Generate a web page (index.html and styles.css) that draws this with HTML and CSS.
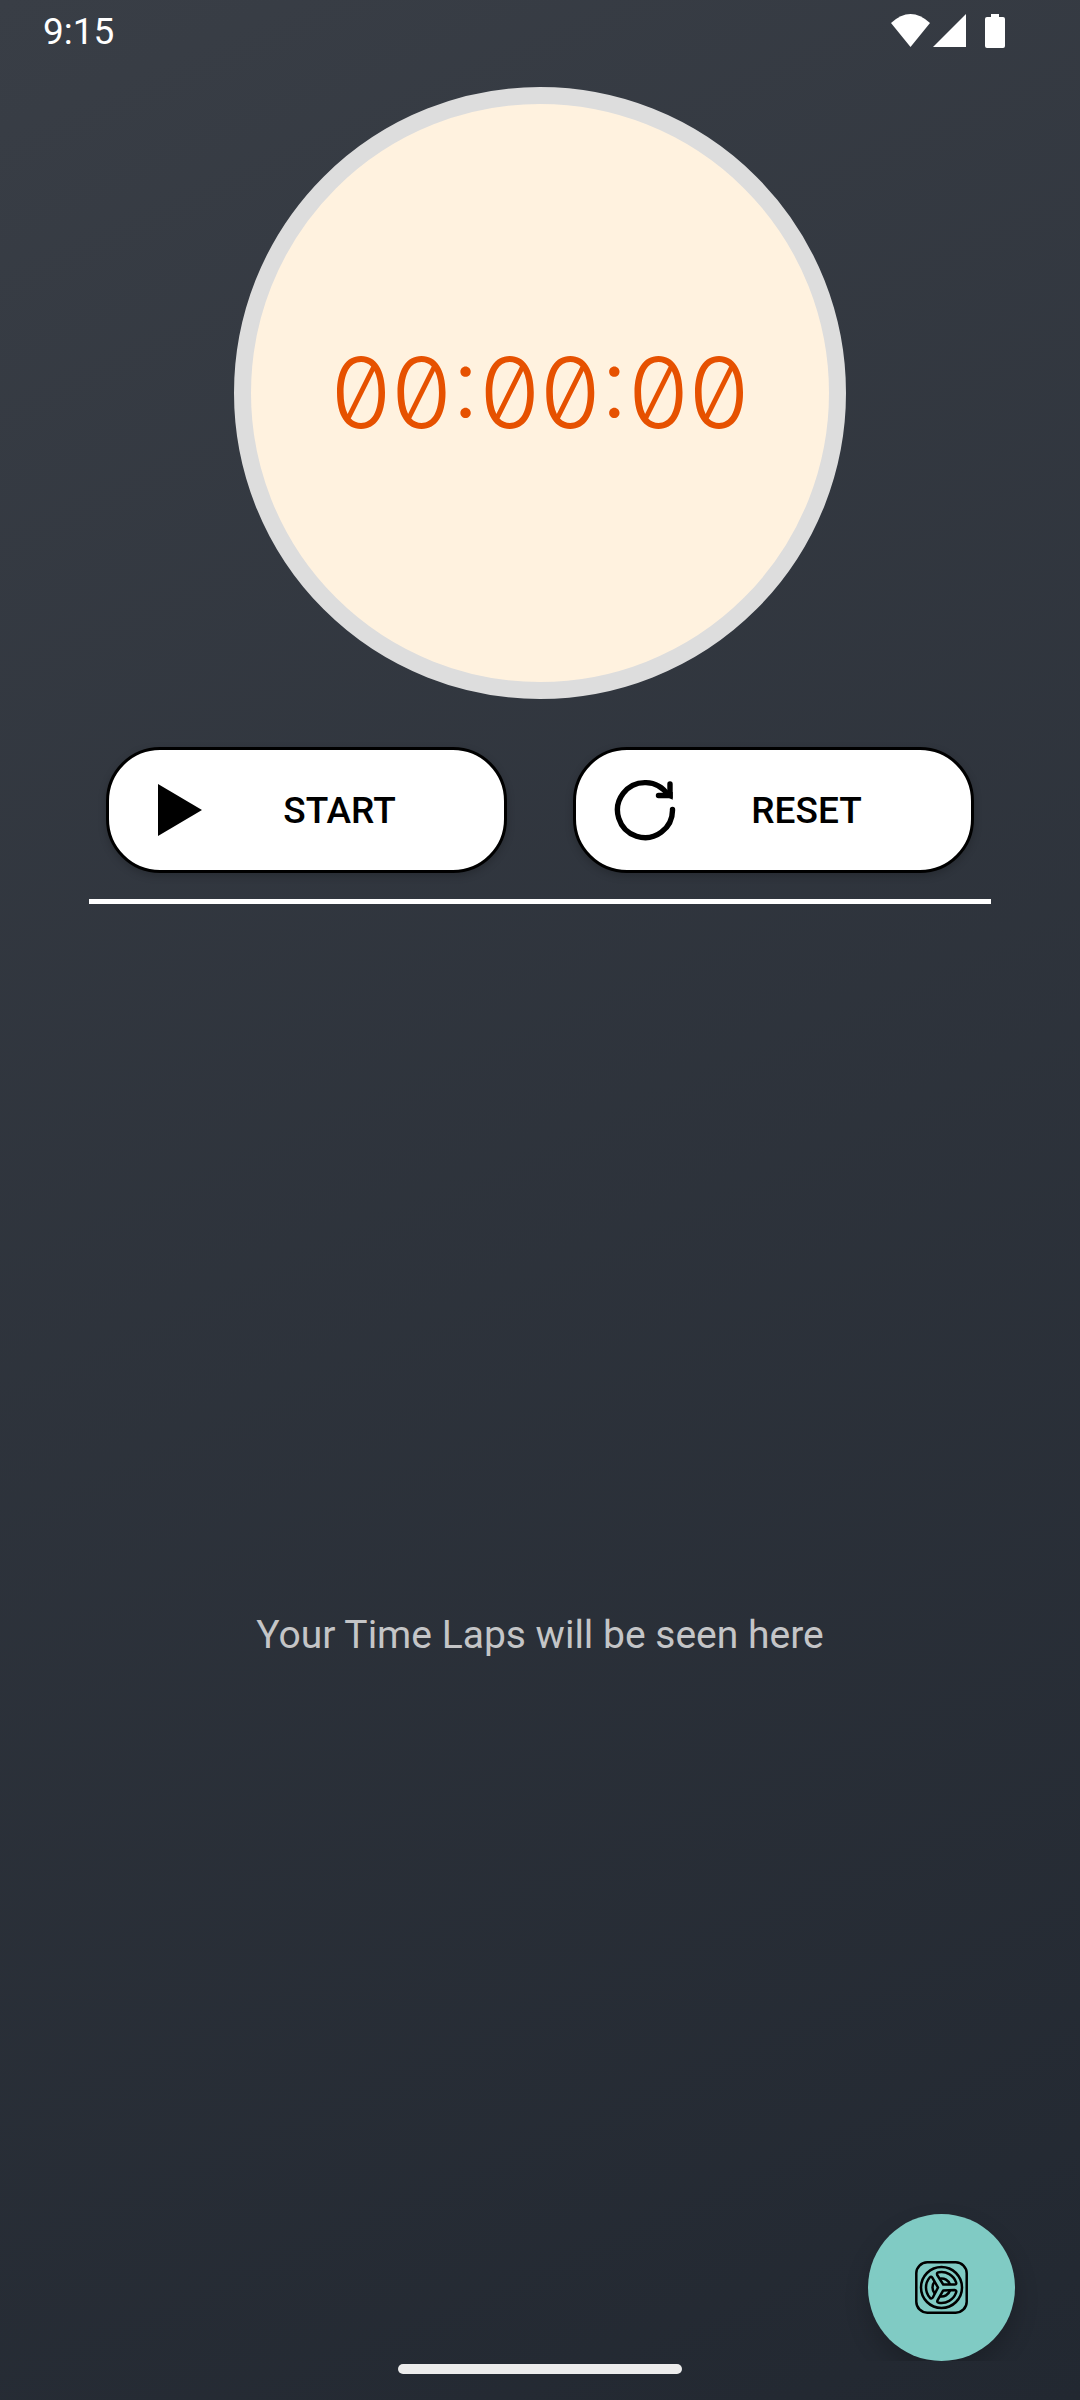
FILE: index.html
```html
<!DOCTYPE html>
<html lang="en">
<head>
<meta charset="utf-8">
<meta name="viewport" content="width=device-width, initial-scale=1">
<title>Stopwatch</title>
<link rel="stylesheet" href="styles.css">
</head>
<body>
<header class="status-bar">
  <time class="status-time">9:15</time>
  <div class="status-icons">
    <svg class="icon-wifi" viewBox="0 0 39 33" aria-hidden="true"><path d="M0 9Q19.500 -9 39 9L19.500 33Z"/></svg>
    <svg class="icon-signal" viewBox="0 0 33 33" aria-hidden="true"><path d="M33 0V33H0Z"/></svg>
    <svg class="icon-battery" viewBox="0 0 20 34" aria-hidden="true"><path d="M6 0h8v3h4a2 2 0 0 1 2 2v27a2 2 0 0 1-2 2H2a2 2 0 0 1-2-2V5a2 2 0 0 1 2-2h4z"/></svg>
  </div>
</header>
<main class="stopwatch">
  <section class="dial">
    <output class="dial-time">00:00:00</output>
  </section>
  <div class="controls">
    <button class="control" type="button">
      <svg class="control-icon" viewBox="0 0 66 66" aria-hidden="true"><path d="M13 7L57 33L13 59Z"/></svg>
      <span class="control-label">START</span>
    </button>
    <button class="control" type="button">
      <svg class="control-icon" viewBox="0 0 66 66" fill="none" stroke="#000" stroke-width="5.400" stroke-linecap="round" aria-hidden="true">
        <path d="M60.500 32.500A27.500 27.500 0 1 1 56 18"/>
        <path d="M58 7V18.500H46.500"/>
        <path d="M52 15.500L58 18.500V15" stroke-linecap="butt"/>
      </svg>
      <span class="control-label">RESET</span>
    </button>
  </div>
  <hr class="divider">
  <section class="laps">
    <p class="laps-empty">Your Time Laps will be seen here</p>
  </section>
  <button class="fab" type="button" aria-label="Settings">
    <svg class="fab-icon" viewBox="-26.500 -26.500 53 53" fill="none" stroke="#000" stroke-width="2.500" stroke-linejoin="round" aria-hidden="true">
      <rect x="-25.200" y="-25.200" width="50.400" height="50.400" rx="11"/>
      <circle r="20.500"/>
      <g id="blade"><path d="M1.730 -3L-4.300 -12.500Q-5.200 -15 -2.800 -15.200A15.400 15.400 0 0 1 14.600 -5.200Q15.400 -3 12.900 -3Z"/><path d="M-1.640 -8.850A9 9 0 0 1 8.490 -3"/></g>
      <use href="#blade" transform="rotate(120)"/>
      <use href="#blade" transform="rotate(240)"/>
    </svg>
  </button>
</main>
<footer class="nav-bar"><span class="nav-handle"></span></footer>
</body>
</html>
```
FILE: styles.css
```css
* {
  box-sizing: border-box;
}

body {
  margin: 0;
  min-height: 100vh;
  display: flex;
  flex-direction: column;
  font-family: Roboto, sans-serif;
  background: linear-gradient(156deg, #393e46, #222831);
}

.status-bar {
  height: 62px;
  padding: 0 75px 0 43px;
  display: flex;
  align-items: center;
  justify-content: space-between;
}

.status-time {
  padding-top: 2px;
  font-size: 37px;
  line-height: 44px;
  color: #fff;
}

.status-icons {
  display: flex;
  fill: #fff;
}

.icon-wifi {
  width: 39px;
  height: 33px;
}

.icon-signal {
  width: 33px;
  height: 33px;
  margin-left: 3px;
}

.icon-battery {
  width: 20px;
  height: 34px;
  margin-left: 19px;
}

.stopwatch {
  position: relative;
  flex: 1;
  display: flex;
  flex-direction: column;
  padding-top: 25px;
  overflow: hidden;
}

.dial {
  align-self: center;
  width: 612px;
  max-width: 90%;
  aspect-ratio: 1;
  display: flex;
  align-items: center;
  justify-content: center;
  border: 17px solid #ddd;
  border-radius: 50%;
  background: #fff2df;
}

.dial-time {
  font-family: Inter, sans-serif;
  font-size: 98px;
  font-weight: 300;
  line-height: 104px;
  font-feature-settings: "zero";
  color: #e65100;
}

.controls {
  display: flex;
  gap: 66px;
  margin: 48px 106px 0;
}

.control {
  flex: 1;
  height: 126px;
  display: flex;
  align-items: center;
  padding: 0 36px;
  border: 3px solid #000;
  border-radius: 54px;
  background: #fff;
  color: #000;
  font-family: inherit;
  box-shadow: 0 3px 8px rgba(0, 0, 0, 0.2);
}

.control-icon {
  width: 66px;
  height: 66px;
}

.control-label {
  flex: 1;
  padding-top: 2px;
  font-size: 37px;
  font-weight: 500;
  line-height: 44px;
  text-align: center;
}

.divider {
  height: 5px;
  margin: 26px 89px 0;
  border: 0;
  background: #fff;
}

.laps {
  flex: 1;
  display: flex;
  align-items: center;
  justify-content: center;
  padding-top: 4px;
}

.laps-empty {
  margin: 0;
  font-size: 39px;
  line-height: 46px;
  color: #c4c5c7;
}

.fab {
  position: absolute;
  right: 65px;
  bottom: 0;
  width: 147px;
  height: 147px;
  display: flex;
  align-items: center;
  justify-content: center;
  padding: 0;
  border: 0;
  border-radius: 50%;
  background: #80cbc4;
  box-shadow: 0 12px 24px rgba(0, 0, 0, 0.2);
}

.fab-icon {
  width: 53px;
  height: 53px;
}

.nav-bar {
  height: 39px;
  padding-top: 3px;
  display: flex;
  justify-content: center;
}

.nav-handle {
  width: 284px;
  height: 10px;
  border-radius: 5px;
  background: #ececec;
}
```
